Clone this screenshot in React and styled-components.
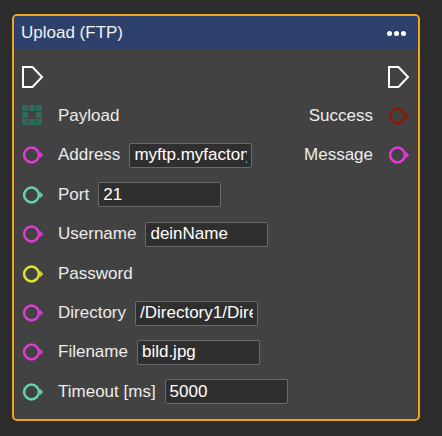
import styled, { createGlobalStyle } from 'styled-components';

const GlobalStyle = createGlobalStyle`
  html, body {
    margin: 0;
    padding: 0;
    background: #2c2c2c;
  }
  body {
    font-family: "Liberation Sans", Arial, sans-serif;
  }
`;

const Page = styled.div`
  padding: 14px 0 0 12px;
`;

const Node = styled.section`
  width: 408px;
  box-sizing: border-box;
  border: 2px solid #eea51c;
  border-radius: 5px;
  background: #424242;
  overflow: hidden;
`;

const Header = styled.header`
  height: 34px;
  background: #2e416d;
  display: flex;
  align-items: center;
  justify-content: space-between;
  padding: 0 12px 0 7px;
`;

const Title = styled.h1`
  margin: 0;
  font-size: 17px;
  font-weight: normal;
  color: #f2f2f2;
`;

const Dots = styled.div`
  display: flex;
  gap: 2px;
  span {
    width: 5px;
    height: 5px;
    border-radius: 50%;
    background: #fff;
  }
`;

const Body = styled.div`
  padding: 7px 8px 7px 8px;
`;

const Row = styled.div`
  height: 39.4px;
  display: flex;
  align-items: center;
  justify-content: space-between;
`;

const Side = styled.div`
  display: flex;
  align-items: center;
`;

const Label = styled.span`
  font-size: 17px;
  color: #ececec;
  white-space: nowrap;
  margin: ${(p) => (p.$right ? '0 15px 0 0' : '0 0 0 14px')};
`;

const Field = styled.input`
  width: 123px;
  height: 25px;
  box-sizing: border-box;
  margin-left: 9px;
  padding: 0 4px;
  background: #2f2f2f;
  border: 1px solid #6a6a6a;
  border-radius: 2px;
  color: #fff;
  font-family: "Liberation Sans", Arial, sans-serif;
  font-size: 17px;
  outline: none;
`;

const PinBox = styled.svg`
  width: 22px;
  height: 22px;
  flex: none;
  display: block;
`;

const ExecPin = () => (
  <PinBox viewBox="0 0 22 22">
    <path d="M1 1 H10.5 L20 11 L10.5 21 H1 Z" fill="none" stroke="#fff" strokeWidth="2" strokeLinejoin="miter" />
  </PinBox>
);

const DataPin = ({ color }) => (
  <PinBox viewBox="0 0 22 22">
    <circle cx="9.5" cy="11" r="7.4" fill="none" stroke={color} strokeWidth="2.5" />
    <path d="M18.2 7.8 L21.2 11 L18.2 14.2 Z" fill={color} />
  </PinBox>
);

const ArrayPin = () => (
  <PinBox viewBox="0 0 22 22">
    {[0, 1, 2].flatMap((r) =>
      [0, 1, 2].map((c) =>
        r === 1 && c === 1 ? null : (
          <rect key={`${r}${c}`} x={c * 7} y={r * 7} width="6" height="6" fill="#2d6a5b" />
        )
      )
    )}
  </PinBox>
);

const PINK = '#e23ad6';
const TEAL = '#62d6a6';
const YELLOW = '#e4e42a';
const RED = '#8a1a0c';

const inputs = [
  { pin: <ArrayPin />, label: 'Payload', out: { label: 'Success', color: RED } },
  { pin: <DataPin color={PINK} />, label: 'Address', value: 'myftp.myfactory.com', out: { label: 'Message', color: PINK } },
  { pin: <DataPin color={TEAL} />, label: 'Port', value: '21' },
  { pin: <DataPin color={PINK} />, label: 'Username', value: 'deinName' },
  { pin: <DataPin color={YELLOW} />, label: 'Password' },
  { pin: <DataPin color={PINK} />, label: 'Directory', value: '/Directory1/Directory2' },
  { pin: <DataPin color={PINK} />, label: 'Filename', value: 'bild.jpg' },
  { pin: <DataPin color={TEAL} />, label: 'Timeout [ms]', value: '5000' },
];

export default function App() {
  return (
    <>
      <GlobalStyle />
      <Page>
        <Node>
          <Header>
            <Title>Upload (FTP)</Title>
            <Dots>
              <span />
              <span />
              <span />
            </Dots>
          </Header>
          <Body>
            <Row>
              <ExecPin />
              <ExecPin />
            </Row>
            {inputs.map((row) => (
              <Row key={row.label}>
                <Side>
                  {row.pin}
                  <Label>{row.label}</Label>
                  {row.value !== undefined && <Field defaultValue={row.value} />}
                </Side>
                {row.out && (
                  <Side>
                    <Label $right>{row.out.label}</Label>
                    <DataPin color={row.out.color} />
                  </Side>
                )}
              </Row>
            ))}
          </Body>
        </Node>
      </Page>
    </>
  );
}
